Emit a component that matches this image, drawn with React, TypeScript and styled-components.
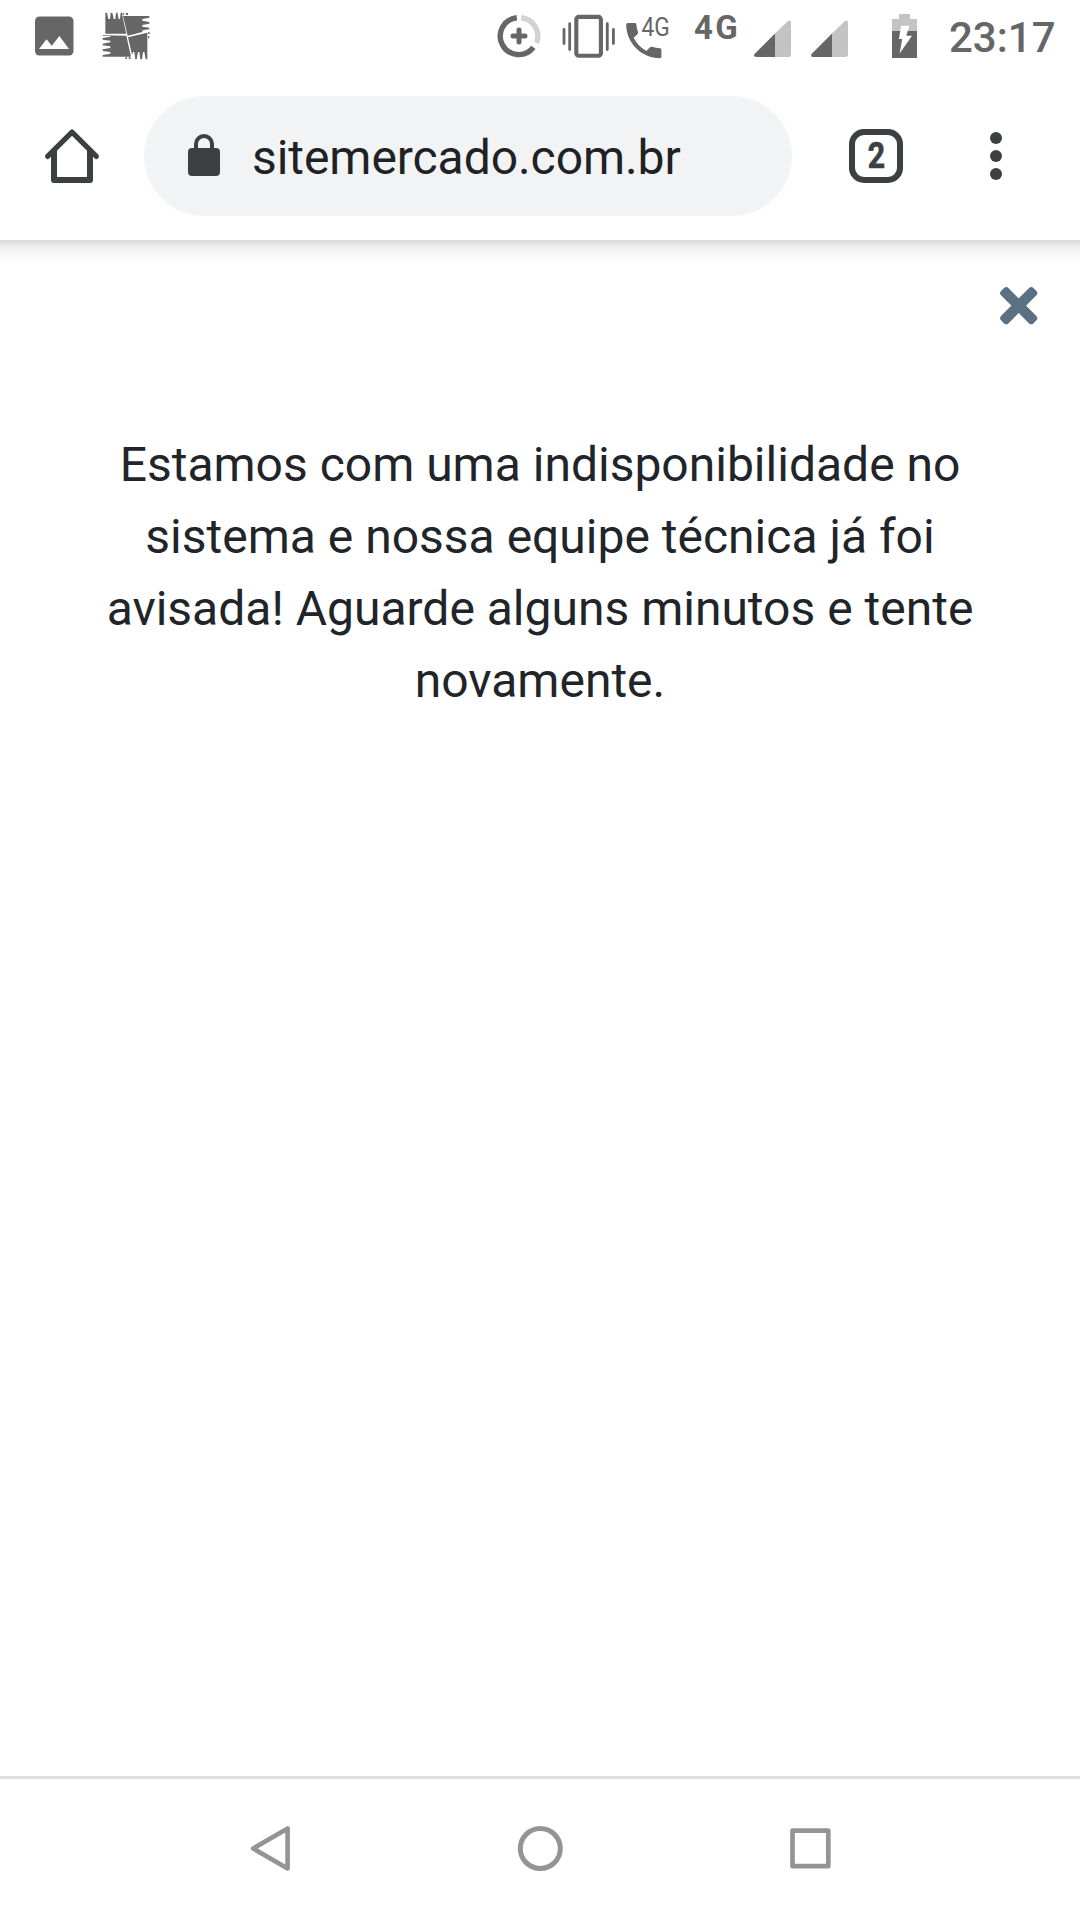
import React from 'react';
import styled, { createGlobalStyle } from 'styled-components';

const GlobalStyle = createGlobalStyle`
  body {
    margin: 0;
    background: #fff;
    font-family: Roboto, 'Liberation Sans', sans-serif;
  }
`;

const Screen = styled.div`
  display: flex;
  flex-direction: column;
  width: 1080px;
  height: 1920px;
  overflow: hidden;
  background: #fff;
`;

const StatusBar = styled.header`
  display: flex;
  justify-content: space-between;
  height: 72px;
  padding: 0 24px 0 32px;
  color: #666;
`;

const StatusGroup = styled.div`
  display: flex;
  align-items: flex-start;
`;

const Glyph = styled.svg<{ $gap?: number }>`
  display: block;
  flex: none;
  margin-left: ${({ $gap = 0 }) => $gap}px;
  overflow: visible;
`;

const NetworkLabel = styled.span`
  width: 46px;
  margin-left: 22px;
  padding-top: 8px;
  font-size: 33px;
  font-weight: 700;
  line-height: 39px;
  letter-spacing: 2.2px;
`;

const Clock = styled.time`
  width: 107px;
  margin-left: 32px;
  font-size: 42px;
  font-weight: 500;
  line-height: 76px;
  white-space: nowrap;
`;

const Toolbar = styled.nav`
  display: flex;
  align-items: center;
  height: 168px;
  color: #3c4043;
`;

const ToolButton = styled.button<{ $width: number }>`
  display: flex;
  align-items: center;
  justify-content: center;
  width: ${({ $width }) => $width}px;
  height: 168px;
  padding: 0;
  border: 0;
  background: transparent;
  color: inherit;
`;

const AddressBar = styled.div`
  display: flex;
  align-items: center;
  width: 604px;
  height: 120px;
  padding-left: 44px;
  border-radius: 60px;
  background: #f1f3f4;
`;

const Address = styled.span`
  margin-left: 32px;
  padding-top: 3px;
  font-size: 48px;
  line-height: 56px;
  letter-spacing: -0.06px;
  color: #202124;
`;

const TabCount = styled.span`
  display: flex;
  align-items: center;
  justify-content: center;
  box-sizing: border-box;
  width: 54px;
  height: 54px;
  border: 6px solid #3c4043;
  border-radius: 15px;
`;

const TabNumber = styled.span`
  font: 700 36px/42px Roboto, sans-serif;
  -webkit-text-stroke: 0.7px #3c4043;
  transform: scaleX(0.84);
`;

const Page = styled.main`
  display: flex;
  flex-direction: column;
  height: 1536px;
`;

const ToolbarShadow = styled.div`
  height: 24px;
  background: linear-gradient(#d7d7d7, #e7e7e7 17%, #f1f1f1 38%, #fafafa 67%, #fff);
`;

const CloseRow = styled.div`
  display: flex;
  justify-content: flex-end;
  padding: 23px 43px 0 0;
`;

const CloseButton = styled.button`
  padding: 0;
  border: 0;
  background: transparent;
  color: #5b7083;
`;

const Message = styled.p`
  margin: 105px 90px 0;
  font-size: 48px;
  line-height: 72px;
  color: #212529;
  text-align: center;
`;

const NavigationBar = styled.footer`
  display: flex;
  box-sizing: border-box;
  height: 144px;
  padding: 0 135px;
  border-top: 3px solid #dfdfdf;
  color: #949494;
`;

const NavButton = styled.button`
  display: flex;
  flex: 1;
  align-items: flex-start;
  justify-content: center;
  padding: 45px 0 0;
  border: 0;
  background: transparent;
  color: inherit;
`;

const PictureIcon = () => (
  <Glyph width="44" height="72" viewBox="32 0 44 72" fill="currentColor">
    <rect x="35" y="16.5" width="38.5" height="39" rx="4.5" />
    <path d="M39 49L46.5 39.3L51.8 45.7L59.4 36L69 49Z" fill="#fff" />
  </Glyph>
);

const PinwheelIcon = () => (
  <Glyph $gap={24} width="52" height="72" viewBox="240 0 156 216" fill="currentColor">
    <path d="M256 38H261L265 57L270 57L272 38H277L281 57L286 57L288 38H292L296 57L300 57L302 38H306L308 51L319 101H256Z" />
    <path d="M309 48H388V53L367 57V62L388 66V71L367 75V80L388 83V88L367 91V96L323 107Z" />
    <path d="M324 112L382 98V178H377L373 156H369L366 178H361L358 156H354L350 178H346L343 156H339L336 164Z" />
    <path d="M248 106L319 107L333 170H248V165L271 161V156L248 153V148L271 144V139L248 136V131L271 127V122L248 119V114L271 110V108L248 108Z" />
    <path d="M308 39h4v5h-4zM318 39h6v6h-6zM384 97h5v5h-5zM384 109h4v6h-4zM316 172h5v5h-5zM326 172h6v5h-6z" />
  </Glyph>
);

const DataSaverIcon = () => (
  <Glyph width="48" height="72" viewBox="495 0 48 72" fill="none" stroke="currentColor" strokeWidth="5.4">
    <path d="M521.2 17.7A18.5 18.5 0 0 1 536.5 43" stroke="#d2d2d2" />
    <path d="M516.8 17.7A18.5 18.5 0 1 0 533.4 47.4" />
    <path d="M519 30V42M513 36H525" strokeWidth="5" strokeLinecap="round" />
  </Glyph>
);

const VibrateIcon = () => (
  <Glyph $gap={17} width="58" height="72" viewBox="560 0 58 72" fill="none" stroke="currentColor">
    <rect x="576.3" y="16.9" width="24.6" height="38.8" rx="2.5" strokeWidth="4.1" />
    <path
      d="M564 29.3V43.5M569.7 23.7V49.5M607.3 23.7V49.5M613.4 29.3V43.5"
      strokeWidth="2.8"
      strokeLinecap="round"
    />
  </Glyph>
);

const CallIcon = () => (
  <Glyph $gap={6} width="48" height="72" viewBox="624 0 48 72" fill="currentColor">
    <path d="M627.8 23H634.7Q636 23 636.3 24.3Q636.6 28.4 638 32.3Q638.4 33.4 637.4 34.3L633.7 37.8Q638 46.5 646.4 51L650 47.3Q650.8 46.4 652 46.8Q655.8 48 660 48.2Q661.4 48.3 661.4 49.7V56.8Q661.4 58.2 660 58.2C641.5 58.2 626.2 43 626.2 24.5Q626.2 23 627.8 23Z" />
    <text x="0" y="0" transform="translate(641.4 36) scale(.86 1)" fontSize="26.5">
      4G
    </text>
  </Glyph>
);

const SignalIcon = ({ gap }: { gap: number }) => (
  <Glyph $gap={gap} width="37" height="72" viewBox="754 0 37 72">
    <path d="M775 33.4L787.5 21.4Q791 19 791 23V54.5Q791 57 788.5 57H775Z" fill="#c3c3c3" />
    <path d="M775 33.4V57H756.2Q753.2 57 754.5 54Z" fill="#666" />
  </Glyph>
);

const BatteryIcon = () => (
  <Glyph $gap={44} width="25" height="72" viewBox="892 0 25 72">
    <path d="M899 14H910V19H917V31H892V19H899Z" fill="#c3c3c3" />
    <path d="M892 31H917V58H892Z" fill="#666" />
    <path d="M901 25.8H909.5L906.2 35.8H912L899.6 53.5L902.2 39H899Z" fill="#fff" />
  </Glyph>
);

const HomeIcon = () => (
  <Glyph width="54" height="54" viewBox="0 0 54 54" fill="none" stroke="currentColor" strokeWidth="6" strokeLinejoin="round">
    <path d="M2.6 27.4L27 3.1L51.4 27.4" strokeWidth="5.2" strokeLinecap="round" />
    <path d="M9 20V51H45V20" />
    <path d="M6 46H48V49Q48 54 43 54H11Q6 54 6 49ZM12 48H42V46H12Z" fill="currentColor" fillRule="evenodd" stroke="none" />
  </Glyph>
);

const LockIcon = () => (
  <Glyph width="32" height="44" viewBox="0 0 32 44" fill="#3c4043">
    <rect y="14" width="32" height="28" rx="4" />
    <path d="M8 17V10A8 8 0 0 1 24 10V17" fill="none" stroke="#3c4043" strokeWidth="4" />
  </Glyph>
);

const MenuIcon = () => (
  <Glyph width="12" height="48" viewBox="0 0 12 48" fill="currentColor">
    <circle cx="6" cy="6" r="6" />
    <circle cx="6" cy="24" r="6" />
    <circle cx="6" cy="42" r="6" />
  </Glyph>
);

const CloseIcon = () => (
  <Glyph width="37" height="37" viewBox="0 0 37 37" fill="currentColor">
    <g transform="translate(18.7 18.7)">
      <rect x="-22.9" y="-5.2" width="45.8" height="10.4" rx="3.4" transform="rotate(45)" />
      <rect x="-22.9" y="-5.2" width="45.8" height="10.4" rx="3.4" transform="rotate(-45)" />
    </g>
  </Glyph>
);

const BackIcon = () => (
  <Glyph width="40" height="50" viewBox="250 1824 40 50" fill="none" stroke="currentColor" strokeWidth="4.6" strokeLinejoin="round">
    <path d="M287.6 1828.4V1868.5L253.2 1848.5Z" />
  </Glyph>
);

const CircleIcon = () => (
  <Glyph width="50" height="50" viewBox="515 1824 50 50" fill="none" stroke="currentColor" strokeWidth="5">
    <circle cx="540.3" cy="1848.5" r="20" />
  </Glyph>
);

const SquareIcon = () => (
  <Glyph width="50" height="50" viewBox="785 1824 50 50" fill="none" stroke="currentColor" strokeWidth="4.7" strokeLinejoin="round">
    <rect x="792.5" y="1830.6" width="35.8" height="35.6" />
  </Glyph>
);

export default function App() {
  return (
    <>
      <GlobalStyle />
      <Screen>
        <StatusBar>
          <StatusGroup>
            <PictureIcon />
            <PinwheelIcon />
          </StatusGroup>
          <StatusGroup>
            <DataSaverIcon />
            <VibrateIcon />
            <CallIcon />
            <NetworkLabel>4G</NetworkLabel>
            <SignalIcon gap={14} />
            <SignalIcon gap={20} />
            <BatteryIcon />
            <Clock>23:17</Clock>
          </StatusGroup>
        </StatusBar>
        <Toolbar>
          <ToolButton $width={144} aria-label="Início">
            <HomeIcon />
          </ToolButton>
          <AddressBar>
            <LockIcon />
            <Address>sitemercado.com.br</Address>
          </AddressBar>
          <ToolButton $width={168} aria-label="Abas">
            <TabCount>
              <TabNumber>2</TabNumber>
            </TabCount>
          </ToolButton>
          <ToolButton $width={72} aria-label="Menu">
            <MenuIcon />
          </ToolButton>
        </Toolbar>
        <Page>
          <ToolbarShadow />
          <CloseRow>
            <CloseButton aria-label="Fechar">
              <CloseIcon />
            </CloseButton>
          </CloseRow>
          <Message>
            Estamos com uma indisponibilidade no sistema e nossa equipe técnica já foi avisada! Aguarde
            alguns minutos e tente novamente.
          </Message>
        </Page>
        <NavigationBar>
          <NavButton aria-label="Voltar">
            <BackIcon />
          </NavButton>
          <NavButton aria-label="Tela inicial">
            <CircleIcon />
          </NavButton>
          <NavButton aria-label="Recentes">
            <SquareIcon />
          </NavButton>
        </NavigationBar>
      </Screen>
    </>
  );
}
